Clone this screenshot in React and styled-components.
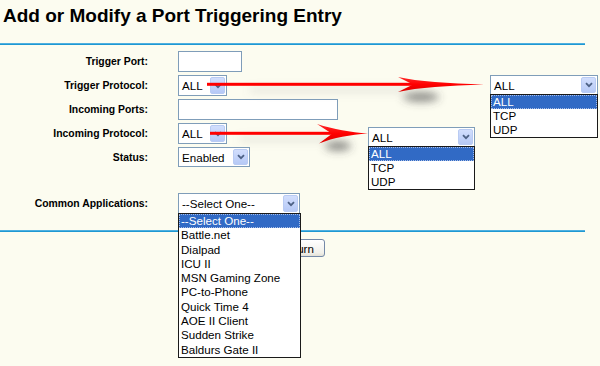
import React from "react";
import styled, { createGlobalStyle } from "styled-components";

const Global = createGlobalStyle`
  html, body { margin: 0; padding: 0; background: #fcfcf0; }
  * { box-sizing: border-box; }
`;

const Page = styled.div`
  position: relative;
  width: 600px;
  height: 366px;
  overflow: hidden;
  background: #fcfcf0;
  font-family: "Liberation Sans", Arial, sans-serif;
  color: #000;
`;

const Title = styled.h1`
  margin: 0;
  padding: 5px 0 0 3px;
  font-size: 19px;
  line-height: 22px;
  font-weight: bold;
`;

const Rule = styled.div`
  width: 585px;
  height: 2px;
  margin-top: ${p => p.$top}px;
  background: #1f98d2;
  border-top: 1px solid #4fb0e0;
`;

const Form = styled.div`
  display: grid;
  grid-template-columns: 148px auto;
  column-gap: 30px;
  row-gap: 3px;
  align-items: center;
  justify-items: start;
  margin-top: 6px;
`;

const Label = styled.label`
  justify-self: end;
  font-size: 10.4px;
  font-weight: bold;
  white-space: nowrap;
`;

const Spacer = styled.div`
  grid-column: 1 / -1;
  height: 20px;
`;

const TextInput = styled.div`
  width: ${p => p.$w}px;
  height: 21px;
  border: 1px solid #7f9db9;
  background: #fff;
`;

const SelectWrap = styled.div`
  position: relative;
`;

const SelectBox = styled.div`
  display: flex;
  align-items: stretch;
  width: ${p => p.$w}px;
  height: ${p => p.$h || 21}px;
  border: 1px solid #7f9db9;
  background: #fff;
  font-size: 11.6px;
`;

const SelectText = styled.span`
  flex: 1;
  padding-left: 3px;
  align-self: center;
  white-space: nowrap;
  overflow: hidden;
`;

const DropBtn = styled.span`
  width: 15px;
  margin: 1px;
  border: 1px solid #b9cbf3;
  border-radius: 2px;
  background: linear-gradient(#d2defd, #b6c9f6);
  display: flex;
  align-items: center;
  justify-content: center;
`;

const List = styled.ul`
  position: absolute;
  top: calc(100% - 1px);
  left: 0;
  width: ${p => p.$w}px;
  margin: 0;
  padding: 0;
  list-style: none;
  background: #fff;
  border: 1px solid #1a1a1a;
  font-size: 11.6px;
  z-index: 4;
`;

const Item = styled.li`
  height: ${p => p.$h}px;
  line-height: ${p => p.$h}px;
  padding-left: 2px;
  white-space: nowrap;
  background: ${p => (p.$active ? "#316ac5" : "transparent")};
  color: ${p => (p.$active ? "#fff" : "#000")};
  outline: ${p => (p.$active ? "1px dotted #a8bde6" : "none")};
  outline-offset: -1px;
`;

const ButtonRow = styled.div`
  display: flex;
  gap: 4px;
  margin-top: 7px;
  padding-left: 207px;
`;

const Button = styled.button`
  width: 57px;
  height: 18px;
  padding: 0;
  font-family: "Liberation Sans", Arial, sans-serif;
  font-size: 11.6px;
  color: #000;
  border: 1px solid #7489a8;
  border-radius: 3px;
  background: linear-gradient(#ffffff, #f1f0ea 80%, #e2e0d6);
`;

const Callout = styled.div`
  position: absolute;
  left: ${p => p.$x}px;
  top: ${p => p.$y}px;
  z-index: 5;
`;

const Arrows = styled.svg`
  position: absolute;
  left: 0;
  top: 0;
  z-index: 3;
  pointer-events: none;
`;

const Chevron = () => (
  <svg width="8" height="6" viewBox="0 0 8 6">
    <path d="M1 1.2 L4 4.2 L7 1.2" fill="none" stroke="#4d6185" strokeWidth="1.8" />
  </svg>
);

const Select = ({ w, h, value, items, itemH = 14.3, listW }) => (
  <SelectWrap>
    <SelectBox $w={w} $h={h}>
      <SelectText>{value}</SelectText>
      <DropBtn>
        <Chevron />
      </DropBtn>
    </SelectBox>
    {items && (
      <List $w={listW || w}>
        {items.map((it, i) => (
          <Item key={it} $h={itemH} $active={i === 0}>
            {it}
          </Item>
        ))}
      </List>
    )}
  </SelectWrap>
);

const apps = [
  "--Select One--",
  "Battle.net",
  "Dialpad",
  "ICU II",
  "MSN Gaming Zone",
  "PC-to-Phone",
  "Quick Time 4",
  "AOE II Client",
  "Sudden Strike",
  "Baldurs Gate II",
];

const protocols = ["ALL", "TCP", "UDP"];

const head1 = "M398 77 C418 81.5 448 83.2 484 84.5 C448 85.8 418 87.5 398 92 L413 84.5 Z";
const head2 = "M317 124 C334 129.5 350 132 368 133.5 C350 135 334 137.5 319 143.5 L332 133.8 Z";

const RedArrows = () => (
  <Arrows width="600" height="366" viewBox="0 0 600 366">
    <defs>
      <filter id="sh" x="-50%" y="-100%" width="200%" height="300%">
        <feGaussianBlur stdDeviation="4.5" />
      </filter>
      <linearGradient id="red" x1="0" y1="0" x2="0" y2="1">
        <stop offset="0" stopColor="#ff2a2a" />
        <stop offset="0.5" stopColor="#ff0000" />
        <stop offset="1" stopColor="#d80000" />
      </linearGradient>
    </defs>
    <g filter="url(#sh)">
      <ellipse cx="421" cy="97" rx="18" ry="5" fill="#444" opacity="0.6" />
      <rect x="250" y="88" width="160" height="4" fill="#999" opacity="0.3" />
      <ellipse cx="338" cy="146" rx="13" ry="5" fill="#444" opacity="0.6" />
      <rect x="240" y="137" width="90" height="4" fill="#999" opacity="0.3" />
    </g>
    <rect x="207" y="82.8" width="208" height="3" fill="#ff0000" />
    <path d={head1} fill="url(#red)" />
    <rect x="210" y="131.8" width="124" height="3" fill="#ff0000" />
    <path d={head2} fill="url(#red)" />
  </Arrows>
);

export default function App() {
  return (
    <Page>
      <Global />
      <Title>Add or Modify a Port Triggering Entry</Title>
      <Rule $top={16} />
      <Form>
        <Label>Trigger Port:</Label>
        <TextInput $w={64} />
        <Label>Trigger Protocol:</Label>
        <Select w={49} value="ALL" />
        <Label>Incoming Ports:</Label>
        <TextInput $w={160} />
        <Label>Incoming Protocol:</Label>
        <Select w={49} value="ALL" />
        <Label>Status:</Label>
        <Select w={72} h={20} value="Enabled" />
        <Spacer />
        <Label>Common Applications:</Label>
        <Select w={122} listW={123} value="--Select One--" items={apps} />
      </Form>
      <Rule $top={16} />
      <ButtonRow>
        <Button>Save</Button>
        <Button>Return</Button>
      </ButtonRow>
      <RedArrows />
      <Callout $x={490} $y={75}>
        <Select w={108} h={20} value="ALL" items={protocols} itemH={14} />
      </Callout>
      <Callout $x={368} $y={127}>
        <Select w={107} h={20} value="ALL" items={protocols} itemH={14} />
      </Callout>
    </Page>
  );
}
